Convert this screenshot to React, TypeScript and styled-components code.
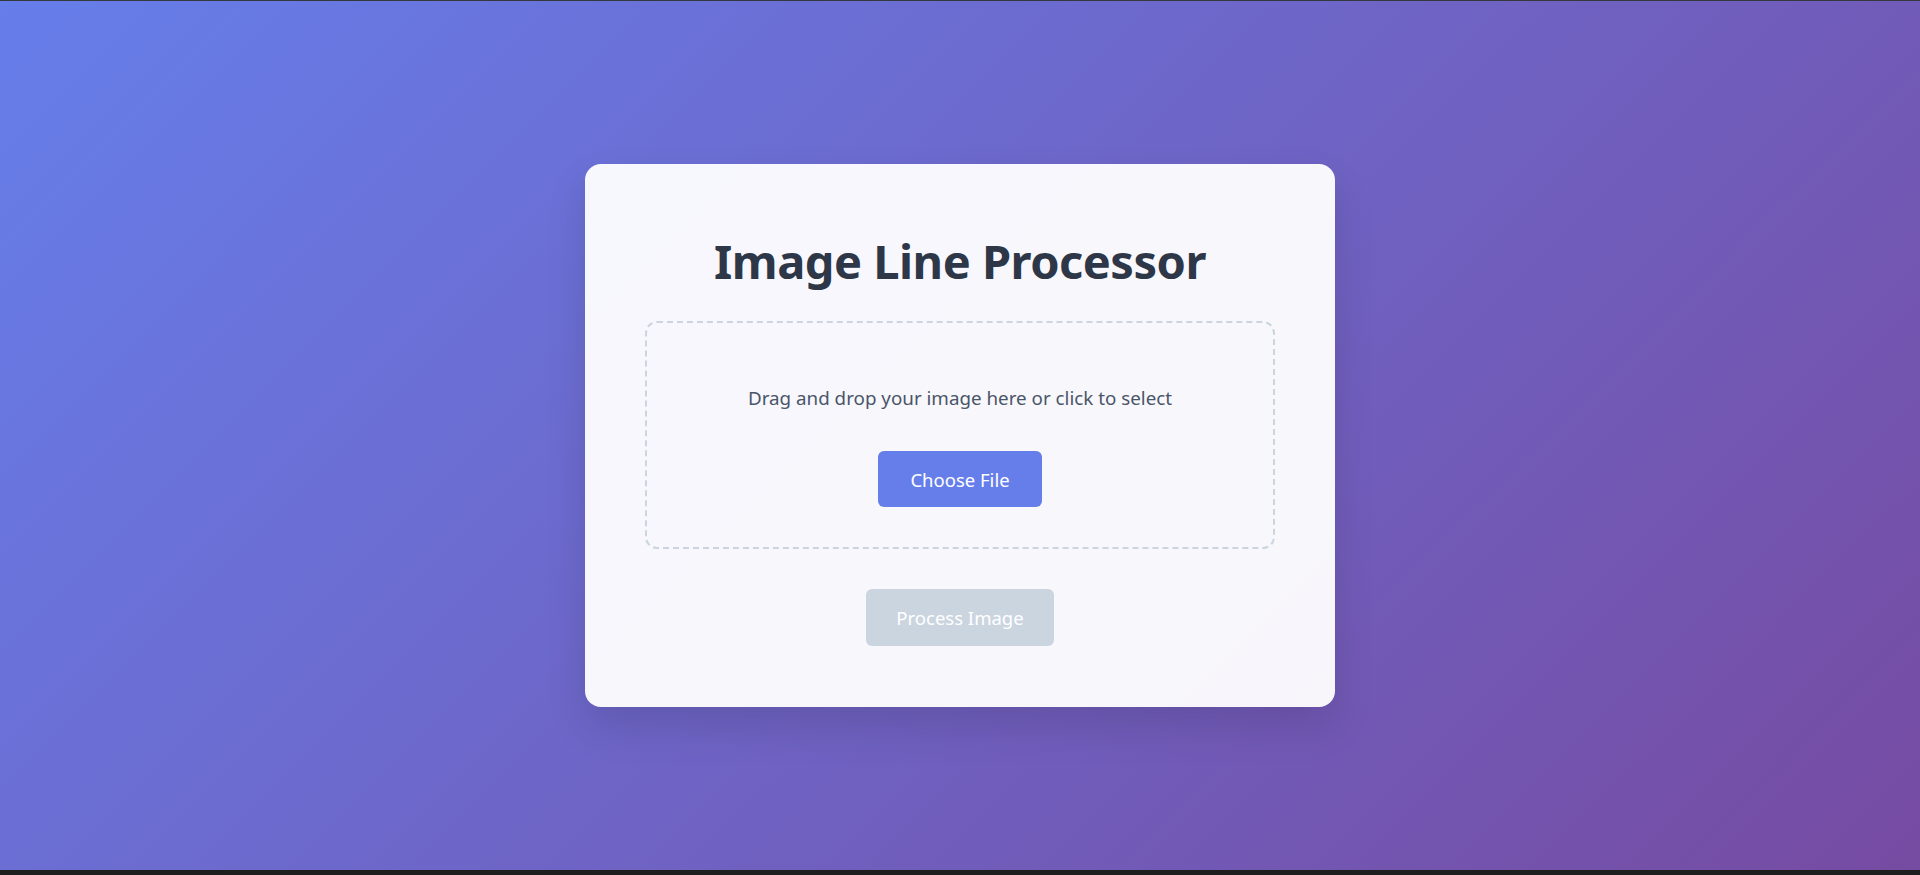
import React from "react";
import styled, { createGlobalStyle } from "styled-components";

const GlobalStyle = createGlobalStyle`
  html, body {
    margin: 0;
    padding: 0;
    background: #1e1e1e;
  }
  * { box-sizing: border-box; }
`;

const Screen = styled.div`
  height: 875px;
  display: flex;
  flex-direction: column;
  background: #1e1e1e;
  border-top: 1px solid #34393e;
`;

const Page = styled.main`
  height: 869px;
  display: flex;
  align-items: center;
  justify-content: center;
  background: linear-gradient(135deg, #667eea 0%, #764ba2 100%);
  font-family: "Noto Sans", "Open Sans", sans-serif;
`;

const Card = styled.section`
  width: 750px;
  padding: 60px 60px 61px;
  background: rgba(255, 255, 255, 0.95);
  border-radius: 16px;
  box-shadow: 0 20px 40px rgba(0, 0, 0, 0.12);
  display: flex;
  flex-direction: column;
  align-items: center;
`;

const Title = styled.h1`
  margin: 0 0 23px;
  font-size: 47px;
  line-height: 74px;
  font-weight: 700;
  color: #2d3748;
  letter-spacing: -0.5px;
`;

const DropZone = styled.div`
  align-self: stretch;
  height: 228px;
  border: 2px dashed #cbd5e0;
  border-radius: 12px;
  padding: 62px 40px 40px;
  display: flex;
  flex-direction: column;
  align-items: center;
`;

const Hint = styled.p`
  margin: 0 0 39px;
  font-size: 18.8px;
  line-height: 27px;
  color: #4a5568;
`;

const Button = styled.button<{ $disabled?: boolean }>`
  height: 56px;
  padding: 0 32px;
  border: none;
  border-radius: 6px;
  font-family: inherit;
  font-size: 18.5px;
  color: #ffffff;
  background: ${(p) => (p.$disabled ? "#cbd5e0" : "#667eea")};
  cursor: ${(p) => (p.$disabled ? "not-allowed" : "pointer")};
`;

const ProcessButton = styled(Button)`
  margin-top: 40px;
  height: 57px;
  padding: 0 30px;
`;

export default function App() {
  return (
    <>
      <GlobalStyle />
      <Screen>
        <Page>
          <Card>
            <Title>Image Line Processor</Title>
            <DropZone>
              <Hint>Drag and drop your image here or click to select</Hint>
              <Button>Choose File</Button>
            </DropZone>
            <ProcessButton $disabled>Process Image</ProcessButton>
          </Card>
        </Page>
      </Screen>
    </>
  );
}
